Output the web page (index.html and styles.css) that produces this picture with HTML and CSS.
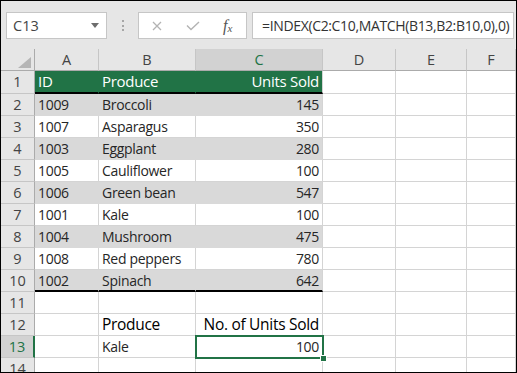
FILE: index.html
```html
<!DOCTYPE html>
<html lang="en">
<head>
  <meta charset="UTF-8" />
  <title>INDEX MATCH</title>
  <link rel="stylesheet" href="styles.css">
</head>
<body>
  <div class="window">
    <div class="toolbar">
      <div class="namebox"><span>C13</span><span class="caret"></span></div>
      <div class="grip"><i></i><i></i><i></i></div>
      <div class="fxbox">
        <svg class="icon-x" width="10" height="10" viewBox="0 0 10 10"><path d="M1 1 L9 9 M9 1 L1 9" stroke="#b3b3b3" stroke-width="1.3" fill="none"/></svg>
        <svg class="icon-ok" width="14" height="10" viewBox="0 0 14 10"><path d="M1 4.5 L5 8.5 L13 1" stroke="#b3b3b3" stroke-width="1.4" fill="none"/></svg>
        <span class="fx"><i>f</i><sub>x</sub></span>
      </div>
      <div class="formula">=INDEX(C2:C10,MATCH(B13,B2:B10,0),0)</div>
    </div>

    <div class="sheet">
      <div class="row colhead">
        <div class="corner"><svg width="33" height="21" viewBox="0 0 33 21"><polygon points="30,8 30,19 17,19" fill="#b5b5b5"/></svg></div>
        <div class="ch">A</div>
        <div class="ch">B</div>
        <div class="ch active">C</div>
        <div class="ch">D</div>
        <div class="ch">E</div>
        <div class="ch">F</div>
      </div>

      <div class="row title">
        <div class="rh">1</div>
        <div class="cell">ID</div>
        <div class="cell">Produce</div>
        <div class="cell num">Units Sold</div>
        <div class="cell"></div><div class="cell"></div><div class="cell"></div>
      </div>
      <div class="row band">
        <div class="rh">2</div>
        <div class="cell">1009</div><div class="cell">Broccoli</div><div class="cell num">145</div>
        <div class="cell"></div><div class="cell"></div><div class="cell"></div>
      </div>
      <div class="row">
        <div class="rh">3</div>
        <div class="cell">1007</div><div class="cell">Asparagus</div><div class="cell num">350</div>
        <div class="cell"></div><div class="cell"></div><div class="cell"></div>
      </div>
      <div class="row band">
        <div class="rh">4</div>
        <div class="cell">1003</div><div class="cell">Eggplant</div><div class="cell num">280</div>
        <div class="cell"></div><div class="cell"></div><div class="cell"></div>
      </div>
      <div class="row">
        <div class="rh">5</div>
        <div class="cell">1005</div><div class="cell">Cauliflower</div><div class="cell num">100</div>
        <div class="cell"></div><div class="cell"></div><div class="cell"></div>
      </div>
      <div class="row band">
        <div class="rh">6</div>
        <div class="cell">1006</div><div class="cell">Green bean</div><div class="cell num">547</div>
        <div class="cell"></div><div class="cell"></div><div class="cell"></div>
      </div>
      <div class="row">
        <div class="rh">7</div>
        <div class="cell">1001</div><div class="cell">Kale</div><div class="cell num">100</div>
        <div class="cell"></div><div class="cell"></div><div class="cell"></div>
      </div>
      <div class="row band">
        <div class="rh">8</div>
        <div class="cell">1004</div><div class="cell">Mushroom</div><div class="cell num">475</div>
        <div class="cell"></div><div class="cell"></div><div class="cell"></div>
      </div>
      <div class="row">
        <div class="rh">9</div>
        <div class="cell">1008</div><div class="cell">Red peppers</div><div class="cell num">780</div>
        <div class="cell"></div><div class="cell"></div><div class="cell"></div>
      </div>
      <div class="row band last">
        <div class="rh">10</div>
        <div class="cell">1002</div><div class="cell">Spinach</div><div class="cell num">642</div>
        <div class="cell"></div><div class="cell"></div><div class="cell"></div>
      </div>
      <div class="row">
        <div class="rh">11</div>
        <div class="cell"></div><div class="cell"></div><div class="cell"></div>
        <div class="cell"></div><div class="cell"></div><div class="cell"></div>
      </div>
      <div class="row">
        <div class="rh">12</div>
        <div class="cell"></div>
        <div class="cell label">Produce</div>
        <div class="cell num label">No. of Units Sold</div>
        <div class="cell"></div><div class="cell"></div><div class="cell"></div>
      </div>
      <div class="row">
        <div class="rh sel">13</div>
        <div class="cell"></div>
        <div class="cell">Kale</div>
        <div class="cell num selected">100<span class="handle"></span></div>
        <div class="cell"></div><div class="cell"></div><div class="cell"></div>
      </div>
      <div class="row">
        <div class="rh">14</div>
        <div class="cell"></div><div class="cell"></div><div class="cell"></div>
        <div class="cell"></div><div class="cell"></div><div class="cell"></div>
      </div>
    </div>
  </div>
</body>
</html>
```

FILE: styles.css
```css
* {
  box-sizing: border-box;
}

body {
  margin: 0;
  font-family: 'Open Sans', 'Noto Sans', sans-serif;
  background: #fff;
}

.window {
  width: 517px;
  height: 373px;
  border: 1px solid #000;
  overflow: hidden;
  background: #fff;
}

/* formula bar */
.toolbar {
  height: 48px;
  background: #e6e6e6;
  display: flex;
  align-items: flex-start;
  padding: 11px 2px 0 5px;
}

.namebox {
  width: 101px;
  height: 27px;
  background: #fff;
  border: 1px solid #c6c6c6;
  display: flex;
  align-items: center;
  justify-content: space-between;
  padding: 0 7px 0 6px;
  font-size: 14.5px;
  color: #444;
}

.caret {
  width: 0;
  height: 0;
  border-left: 4px solid transparent;
  border-right: 4px solid transparent;
  border-top: 5px solid #6d6d6d;
}

.grip {
  width: 31px;
  height: 27px;
  display: flex;
  flex-direction: column;
  align-items: center;
  gap: 2.5px;
  padding-top: 8px;
}

.grip i {
  width: 2px;
  height: 2px;
  background: #a6a6a6;
}

.fxbox {
  width: 109px;
  height: 27px;
  background: #fff;
  border: 1px solid #c6c6c6;
  display: flex;
  align-items: center;
  padding-left: 13px;
}

.icon-ok {
  margin-left: 24px;
}

.fx {
  margin-left: 23px;
  font-family: 'Liberation Serif', serif;
  font-size: 16px;
  color: #555;
  line-height: 1;
}

.fx sub {
  font-size: 11px;
  font-style: italic;
  vertical-align: -1px;
}

.formula {
  flex: 1;
  margin-left: 5px;
  height: 27px;
  background: #fff;
  border: 1px solid #c6c6c6;
  padding-left: 9px;
  font-size: 14px;
  letter-spacing: -0.35px;
  line-height: 25px;
  color: #333;
  white-space: nowrap;
  overflow: hidden;
}

/* grid */
.row {
  display: grid;
  grid-template-columns: 34px 64px 97px 127px 73px 71px 1fr;
  height: 22px;
}

.cell {
  border-right: 1px solid #d4d4d4;
  border-bottom: 1px solid #d4d4d4;
  padding: 0 3px;
  font-size: 14px;
  letter-spacing: -0.3px;
  line-height: 21px;
  color: #262626;
  white-space: nowrap;
  overflow: hidden;
}

.num {
  text-align: right;
}

.corner {
  background: #e6e6e6;
  border-right: 1px solid #ababab;
  border-bottom: 1px solid #ababab;
}

.corner svg {
  display: block;
}

.ch {
  background: #e6e6e6;
  border-right: 1px solid #c6c6c6;
  border-bottom: 1px solid #ababab;
  text-align: center;
  font-size: 14.5px;
  line-height: 21px;
  color: #444;
}

.ch.active {
  background: #d2d2d2;
  color: #217346;
}

.rh {
  background: #e6e6e6;
  border-right: 1px solid #ababab;
  border-bottom: 1px solid #c6c6c6;
  text-align: center;
  font-size: 14.5px;
  line-height: 21px;
  color: #444;
}

.rh.sel {
  background: #d2d2d2;
  color: #217346;
  border-right: 2px solid #217346;
}

.title {
  height: 23px;
}

.title .cell:nth-child(-n+4) {
  background: #217346;
  color: #fff;
  font-size: 15px;
  border-right-color: #217346;
  border-bottom: 2px solid #000;
}

.title .cell:nth-child(4) {
  border-right-color: #d4d4d4;
}

.band .cell:nth-child(-n+4) {
  background: #d9d9d9;
  border-color: #d9d9d9;
}

.band .cell:nth-child(4) {
  border-right-color: #d4d4d4;
}

.last .cell:nth-child(-n+4) {
  border-bottom: 2px solid #000;
}

.label {
  color: #000;
  font-size: 15.5px;
}

.selected {
  position: relative;
  overflow: visible;
}

.selected::after {
  content: '';
  position: absolute;
  top: -1px;
  left: -1px;
  right: -2px;
  bottom: -2px;
  border: 2px solid #217346;
}

.handle {
  position: absolute;
  right: -5px;
  bottom: -5px;
  width: 7px;
  height: 7px;
  background: #217346;
  border: 1px solid #fff;
  z-index: 1;
}
```
